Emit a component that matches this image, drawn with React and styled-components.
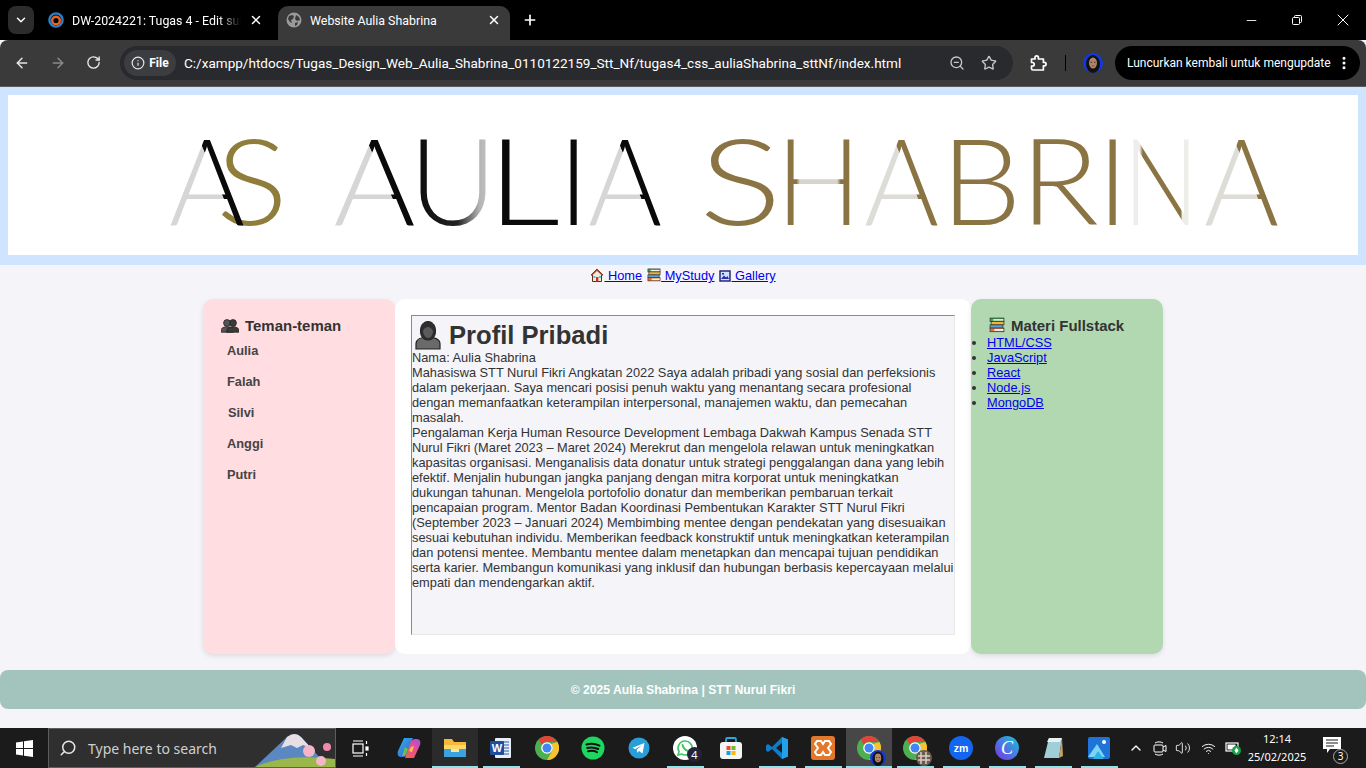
import React from 'react';
import styled, { createGlobalStyle } from 'styled-components';
import {
  ChevronDown, ChevronUp, X, Plus, Minus, ArrowLeft, ArrowRight, RotateCw, Info,
  ZoomOut, Star, EllipsisVertical, Search, Volume2, Wifi,
} from 'lucide-react';

const GlobalStyle = createGlobalStyle`
  html, body {
    margin: 0;
    padding: 0;
    height: 100%;
    overflow: hidden;
    background: #f4f4f9;
  }
`;

const Screen = styled.div`
  width: 1366px;
  height: 768px;
  display: flex;
  flex-direction: column;
  overflow: hidden;
  font-family: "Liberation Sans", Arial, sans-serif;
`;

/* browser chrome */
const TabStrip = styled.div`
  height: 40px;
  flex: none;
  background: #000;
  display: flex;
  align-items: flex-end;
  padding-left: 8px;
  color: #fff;
  font-family: Roboto, "Noto Sans", sans-serif;
`;

const TabSearch = styled.div`
  width: 26px;
  height: 28px;
  margin-bottom: 6px;
  border-radius: 8px;
  background: #2c2c2c;
  display: flex;
  align-items: center;
  justify-content: center;
`;

const Tab = styled.div`
  width: ${(p) => p.$width}px;
  height: 34px;
  padding: 0 ${(p) => p.$right}px 6px ${(p) => p.$left}px;
  box-sizing: border-box;
  border-radius: 10px 10px 0 0;
  background: ${(p) => (p.$active ? '#3a3a3a' : 'transparent')};
  display: flex;
  align-items: center;
  gap: 8px;
  font-size: 12.4px;
`;

const TabTitle = styled.span`
  flex: 1;
  white-space: nowrap;
  overflow: hidden;
  -webkit-mask-image: ${(p) => (p.$fade ? 'linear-gradient(90deg, #000 86%, transparent)' : 'none')};
`;

const NewTab = styled.div`
  margin: 0 0 6px 12px;
  height: 28px;
  display: flex;
  align-items: center;
`;

const WindowControls = styled.div`
  margin-left: auto;
  display: flex;
  height: 40px;
`;

const WindowButton = styled.div`
  width: 46px;
  display: flex;
  align-items: center;
  justify-content: center;
`;

const RestoreIcon = () => (
  <svg width="12" height="12" viewBox="0 0 12 12" fill="none" stroke="#fff" strokeWidth="1">
    <rect x="1.5" y="3.5" width="7" height="7" rx="1" />
    <path d="M3.500 3.500V2.500a1 1 0 0 1 1-1h5a1 1 0 0 1 1 1v5a1 1 0 0 1-1 1h-1" />
  </svg>
);

const Toolbar = styled.div`
  height: 47px;
  flex: none;
  box-sizing: border-box;
  background: #3a3a3a;
  border-bottom: 1px solid #5c5c5c;
  border-radius: 8px 8px 0 0;
  display: flex;
  align-items: center;
  padding: 0 6px 1px 0;
  color: #fff;
  font-family: Roboto, "Noto Sans", sans-serif;
`;

const NavButtons = styled.div`
  width: 120px;
  flex: none;
  display: flex;
  align-items: center;
  padding-left: 14px;
  box-sizing: border-box;
  gap: 20px;
`;

const Omnibox = styled.div`
  width: 893px;
  height: 34px;
  flex: none;
  border-radius: 17px;
  background: #282a2d;
  display: flex;
  align-items: center;
  padding: 0 16px 0 4px;
  box-sizing: border-box;
`;

const SiteChip = styled.div`
  width: 52px;
  height: 26px;
  flex: none;
  box-sizing: border-box;
  border-radius: 13px;
  background: #3c3d40;
  display: flex;
  align-items: center;
  justify-content: center;
  gap: 4px;
  font-size: 12px;
  font-weight: 700;
`;

const UrlText = styled.span`
  margin-left: 8px;
  flex: 1;
  font-size: 13.55px;
  white-space: nowrap;
  color: #fff;
`;

const OmniIcons = styled.div`
  display: flex;
  align-items: center;
  gap: 16px;
`;

const ToolSeparator = styled.div`
  width: 1px;
  height: 16px;
  margin: 0 17px 0 18px;
  background: #000;
`;

const UpdatePill = styled.div`
  margin-left: 12px;
  width: 245px;
  height: 34px;
  box-sizing: border-box;
  border-radius: 17px;
  background: #000;
  display: flex;
  align-items: center;
  justify-content: space-between;
  padding: 0 8px 0 12px;
  font-size: 12px;
  white-space: nowrap;
`;

const ExtensionSlot = styled.div`
  margin-left: 16px;
  display: flex;
`;

const ExtensionIcon = () => (
  <svg width="18" height="18" viewBox="0 0 18 18" fill="none" stroke="#fff" strokeWidth="1.700" strokeLinejoin="round">
    <path d="M2.500 5H6V3.500a1.700 1.700 0 0 1 3.400 0V5h5v3.400h1a1.700 1.700 0 0 1 0 3.400h-1v4.200H4a1.500 1.500 0 0 1-1.500-1.500V12H3.500a1.500 1.500 0 0 0 0-3.500H2.500z" />
  </svg>
);

/* page */
const Page = styled.div`
  flex: 1;
  min-height: 0;
  background: #f4f4f9;
  color: #333;
  font-size: 12.8px;
`;

const Header = styled.header`
  background: #cfe4ff;
  padding: 8px 8px 10px;
`;

const Banner = styled.div`
  height: 160px;
  background: #fff;
`;

const Nav = styled.nav`
  height: 34px;
  padding-top: 3px;
  box-sizing: border-box;
  display: flex;
  align-items: flex-start;
  justify-content: center;
  gap: 5px;
  font-size: 12.8px;
  line-height: 15px;
`;

const NavLink = styled.a`
  color: #00e;
  text-decoration: underline;
  white-space: pre;

  svg {
    vertical-align: -2px;
  }
`;

const Columns = styled.div`
  width: 960px;
  height: 355px;
  margin: 0 auto;
  display: flex;
`;

const Side = styled.aside`
  width: 192px;
  flex: none;
  box-sizing: border-box;
  border-radius: 10px;
  background: ${(p) => p.$bg};
  box-shadow: 0 2px 5px rgba(0, 0, 0, 0.1);
  padding: 18px 0 0 ${(p) => p.$pad}px;
`;

const SideTitle = styled.h3`
  margin: 0;
  padding-left: ${(p) => p.$indent}px;
  height: 16px;
  display: flex;
  align-items: center;
  gap: ${(p) => p.$gap}px;
  font-size: 14.976px;
  font-weight: bold;
  color: #333;
  white-space: nowrap;
`;

const FriendList = styled.div`
  margin-top: 10px;
  display: flex;
  flex-direction: column;
  gap: 16px;
  padding-left: 6px;
`;

const Friend = styled.div`
  height: 15px;
  line-height: 15px;
  font-size: 12.8px;
  font-weight: bold;
  color: #444;
  padding-left: ${(p) => (p.$nudge ? 1 : 0)}px;
`;

const Main = styled.main`
  flex: 1;
  box-sizing: border-box;
  padding: 16px 16px 19px;
  background: #fff;
  border-radius: 10px;
`;

const Frame = styled.section`
  height: 100%;
  box-sizing: border-box;
  background: #f4f4f9;
  border: 1px solid #e8e8e8;
  border-top-color: #8a8a8a;
  border-left-color: #8a8a8a;
`;

const Title = styled.h1`
  margin: 0;
  height: 34px;
  box-sizing: border-box;
  padding: 4px 0 0 2px;
  display: flex;
  align-items: center;
  gap: 7px;
  font-size: 25.6px;
  font-weight: bold;
  color: #333;
`;

const Body = styled.div`
  font-size: 12.8px;
  line-height: 15px;
  color: #333;
`;

const Materi = styled.ul`
  margin: 2px 0 0;
  padding: 0 0 0 16px;
  font-size: 12.8px;
  line-height: 15px;
  color: #333;

  a {
    color: #00e;
  }
`;

const Footer = styled.footer`
  margin-top: 16px;
  height: 39px;
  border-radius: 8px;
  background: #a3c4bc;
  color: #fff;
  display: flex;
  align-items: center;
  justify-content: center;
  font-size: 12.16px;
  font-weight: bold;
`;

/* taskbar */
const Taskbar = styled.div`
  height: 40px;
  flex: none;
  background: #1b1b1b;
  display: flex;
  align-items: stretch;
  color: #fff;
  font-family: "Noto Sans", "Open Sans", sans-serif;
`;

const StartButton = styled.div`
  width: 48px;
  flex: none;
  display: flex;
  align-items: center;
  justify-content: center;
`;

const SearchBox = styled.div`
  position: relative;
  width: 288px;
  flex: none;
  box-sizing: border-box;
  border: 1px solid #5e5e5e;
  background: #2f2f2f;
  display: flex;
  align-items: center;
  gap: 11px;
  padding-left: 10px;
  font-size: 14px;
  color: #cfcfcf;
  overflow: hidden;
`;

const SearchArt = styled.svg`
  position: absolute;
  right: 0;
  bottom: 0;
`;

const MirroredSearch = styled(Search)`
  transform: scaleX(-1);
`;

const Apps = styled.div`
  display: flex;
  margin-left: 2px;
`;

const AppSlot = styled.div`
  position: relative;
  width: 46px;
  display: flex;
  align-items: center;
  justify-content: center;
  background: ${(p) => (p.$state === 'active' ? '#474747' : p.$state === 'open' ? '#2b2b2b' : 'transparent')};

  &::after {
    content: '';
    display: ${(p) => (p.$state ? 'block' : 'none')};
    position: absolute;
    bottom: 0;
    height: 2px;
    background: #8fe3ea;
    left: ${(p) => (p.$state === 'run' ? 5 : 0)}px;
    right: ${(p) => (p.$state === 'run' ? 4 : 0)}px;
  }
`;

const Tray = styled.div`
  flex: 1;
  display: flex;
  align-items: center;
  color: #fff;
`;

const TrayItem = styled.div`
  width: ${(p) => p.$width}px;
  display: flex;
  align-items: center;
  justify-content: center;
`;

const Clock = styled.div`
  width: 64px;
  text-align: center;
  font-size: 11px;
  line-height: 18px;
  white-space: nowrap;
`;

const Notify = styled.div`
  position: relative;
  margin-left: 13px;
  width: 24px;
  height: 24px;
`;

const NotifyBadge = styled.div`
  position: absolute;
  right: -2px;
  bottom: -4px;
  width: 15px;
  height: 15px;
  box-sizing: border-box;
  border: 1px solid #aaa;
  border-radius: 50%;
  background: #1b1b1b;
  font-size: 10px;
  line-height: 13px;
  text-align: center;
`;

const Badge = styled.div`
  position: absolute;
  right: 6px;
  bottom: 6px;
  width: 15px;
  height: 15px;
  border-radius: 50%;
  background: #23233a;
  color: #fff;
  font-size: 11px;
  line-height: 15px;
  text-align: center;
`;

/* emoji drawings */
const HouseEmoji = () => (
  <svg width="14" height="14" viewBox="0 0 14 14">
    <path d="M7 1 1 7h1.500v6.500h9V7H13z" fill="#f3ead8" stroke="#5b2f1c" strokeWidth="1" />
    <path d="M7 1 1 7l1.200.5L7 3l4.800 4.500L13 7z" fill="#b5462e" />
    <rect x="6" y="9" width="2.400" height="4.500" fill="#c0392b" />
    <rect x="3.400" y="8" width="2" height="2" fill="#4ec3e0" />
    <rect x="9" y="8" width="2" height="2" fill="#4ec3e0" />
  </svg>
);

const BooksEmoji = ({ size = 15 }) => (
  <svg width={size} height={size} viewBox="0 0 15 15">
    <rect x="1" y="1" width="13" height="3.200" fill="#3fa34d" stroke="#333" strokeWidth=".7" />
    <rect x="2" y="4.200" width="12" height="3.200" fill="#f3b43c" stroke="#333" strokeWidth=".7" />
    <rect x="1" y="7.400" width="12" height="3" fill="#58a6d6" stroke="#333" strokeWidth=".7" />
    <rect x="1" y="10.400" width="13" height="3.400" fill="#ee6b2d" stroke="#333" strokeWidth=".7" />
    <rect x="5" y="11.200" width="8.500" height="1.800" fill="#f5f5f5" />
    <rect x="4" y="2" width="9.500" height="1.400" fill="#eef3ea" />
  </svg>
);

const FrameEmoji = () => (
  <svg width="12" height="12" viewBox="0 0 12 12">
    <rect x="1" y="1" width="10" height="10" fill="#cfe3ff" stroke="#1a1a6e" strokeWidth="1.400" />
    <path d="M2 9l3-3.500 2 2 1.500-1.500L10 9z" fill="#2a2ab5" />
    <rect x="3" y="3" width="2" height="1.600" fill="#2a2ab5" />
  </svg>
);

const PersonShape = ({ cx, cy, r, fill }) => (
  <g fill={fill} stroke="#222" strokeWidth=".8">
    <path d={`M${cx - r * 1.9} ${cy + r * 2.7} q0 ${-r * 1.6} ${r * 1.9} ${-r * 1.6} q${r * 1.9} 0 ${r * 1.9} ${r * 1.6}z`} />
    <circle cx={cx} cy={cy} r={r} />
  </g>
);

const BustsEmoji = () => (
  <svg width="18" height="15" viewBox="0 0 18 15">
    <PersonShape cx={6} cy={5} r={3.4} fill="#555" />
    <PersonShape cx={12} cy={5} r={3.4} fill="#3a3a3a" />
  </svg>
);

const BustEmoji = () => (
  <svg width="28" height="30" viewBox="0 0 28 30">
    <path d="M2 29v-5c0-5 6-7 12-7s12 2 12 7v5z" fill="#6a6a6a" stroke="#222" strokeWidth="1.200" />
    <path d="M6.500 11c0-6 3-9.500 7.500-9.500s7.500 3.500 7.500 9.500-3 9-7.500 9-7.500-3-7.500-9z" fill="#2e2e2e" stroke="#222" />
    <path d="M9 11c1-3 3-4 6-4 2 1 3.500 2.500 4 4.500-.5 4-2.500 6.500-5 6.500s-4.500-3-5-7z" fill="#5b5b5b" />
  </svg>
);

/* logo banner, real text placed letter by letter */
const LogoGradient = ({ id, stops, x1 = 0, y1 = 0, x2 = 1, y2 = 0 }) => (
  <linearGradient id={id} x1={x1} y1={y1} x2={x2} y2={y2}>
    {stops.map(([offset, color], i) => (
      <stop key={i} offset={offset} stopColor={color} />
    ))}
  </linearGradient>
);

// only the right leg of each A is heavy, so the cut runs along that leg
const legCut = { x1: 0.1, y1: 0.455, x2: 0.7, y2: -0.015 };

const logoLetters = [
  ['S', 208, 72, '#8f7d3c'],
  ['A', 161, 76, 'url(#aBlack)'],
  ['A', 325.6, 82, 'url(#aBlack)'],
  ['U', 401, 88, 'url(#uBlack)'],
  ['L', 479, 73, '#0a0a0a'],
  ['I', 550, null, '#0a0a0a'],
  ['A', 580, 74, 'url(#aBlack)'],
  ['S', 691, 83, '#8b7443'],
  ['H', 768, 85, 'url(#hGold)'],
  ['A', 856, 75, 'url(#aGold)'],
  ['B', 932.5, 81, '#8b7443'],
  ['R', 1012, 79, '#8b7443'],
  ['I', 1089, null, '#8b7443'],
  ['N', 1115, 76, 'url(#nGold)'],
  ['A', 1196, 75, 'url(#aGold)'],
];

const LogoSvg = styled.svg`
  display: block;
  filter: blur(0.4px);
`;

const LogoText = styled.text`
  font-family: Lato, "Open Sans", sans-serif;
  font-weight: 300;
  font-size: 120px;
`;

const Logo = () => (
  <LogoSvg width="1350" height="160" viewBox="0 0 1350 160">
    <defs>
      <LogoGradient id="aBlack" {...legCut} stops={[[0, '#d6d6d6'], [0.49, '#d6d6d6'], [0.5, '#0a0a0a'], [1, '#0a0a0a']]} />
      <LogoGradient id="uBlack" stops={[[0, '#0a0a0a'], [0.55, '#222'], [0.8, '#b4b4b4'], [1, '#cfcfcf']]} />
      <LogoGradient id="aGold" {...legCut} stops={[[0, '#dedcd6'], [0.49, '#dedcd6'], [0.5, '#8b7443'], [1, '#8b7443']]} />
      <LogoGradient id="hGold" stops={[[0, '#8b7443'], [0.24, '#8b7443'], [0.28, '#d6d4cd'], [0.72, '#d6d4cd'], [0.76, '#8b7443'], [1, '#8b7443']]} />
      <LogoGradient id="nGold" stops={[[0, '#eeede9'], [0.22, '#eeede9'], [0.26, '#8b7443'], [0.76, '#8b7443'], [0.78, '#eeede9'], [1, '#eeede9']]} />
    </defs>
    {logoLetters.map(([letter, x, width, fill], i) => (
      <LogoText
        key={i}
        x={x}
        y="130"
        textLength={width || undefined}
        lengthAdjust={width ? 'spacingAndGlyphs' : undefined}
        fill={fill}
      >
        {letter}
      </LogoText>
    ))}
  </LogoSvg>
);

/* small favicons and avatars */
const MoodleIcon = () => (
  <svg width="16" height="16" viewBox="0 0 16 16" fill="none">
    <circle cx="8" cy="8" r="6.600" stroke="#2a7fc9" strokeWidth="2.400" />
    <circle cx="8" cy="8.500" r="3.800" stroke="#f0621f" strokeWidth="2.400" />
  </svg>
);

const GlobeIcon = () => (
  <svg width="16" height="16" viewBox="0 0 16 16">
    <circle cx="8" cy="8" r="7.500" fill="#9a9a9a" />
    <path d="M3 4l3-1 2 1-1 3-2 1 1 3-2-1-2-3zM10 3l3 2 1 3-3 1-2-2zM9 11l3-1-1 3-2 1z" fill="#3a3a3a" />
  </svg>
);

const Avatar = ({ size = 20, ring = '#1438e0' }) => (
  <svg width={size} height={size} viewBox="0 0 20 20">
    <circle cx="10" cy="10" r="10" fill={ring} />
    <ellipse cx="10" cy="11" rx="7" ry="9" fill="#111" />
    <ellipse cx="10" cy="10" rx="4" ry="5.500" fill="#b08468" />
    <rect x="7.500" y="8.800" width="1.600" height=".8" fill="#222" />
    <rect x="11" y="8.800" width="1.600" height=".8" fill="#222" />
    <rect x="8.800" y="12.500" width="2.500" height=".8" fill="#7c3a34" />
  </svg>
);

const WindowsLogo = () => (
  <svg width="17" height="17" viewBox="0 0 17 17" fill="#fff">
    <path d="M0 2.400 7 1.400V8H0zM8 1.200 17 0v8H8zM0 9h7v6.600l-7-1zM8 9h9v8l-9-1.200z" />
  </svg>
);

const TaskView = () => (
  <svg width="17" height="17" viewBox="0 0 17 17" fill="none" stroke="#fff" strokeWidth="1.200">
    <rect x="1" y="4" width="10" height="9" />
    <path d="M1 1h10M1 16h10" />
    <path d="M14.500 1v3M14.500 13v3" />
    <rect x="14" y="7" width="2" height="3" fill="#fff" />
  </svg>
);

const Copilot = () => (
  <svg width="24" height="24" viewBox="0 0 24 24">
    <defs>
      <linearGradient id="copA" x1="0" y1="0" x2="1" y2="1">
        <stop offset="0" stopColor="#2fb8e6" />
        <stop offset="1" stopColor="#3a55d8" />
      </linearGradient>
      <linearGradient id="copB" x1="0" y1="1" x2="1" y2="0">
        <stop offset="0" stopColor="#f2683a" />
        <stop offset=".6" stopColor="#e84aa0" />
        <stop offset="1" stopColor="#8a5ae0" />
      </linearGradient>
    </defs>
    <path d="M7 2h9l-5 14c-1 3-3 5-5 5H4C1 21 0 18 1 15z" fill="url(#copA)" />
    <path d="M17 22H8l5-14c1-3 3-5 5-5h2c3 0 4 3 3 6z" fill="url(#copB)" />
    <path d="M5 20l3-9 3 2-3 7z" fill="#6cc04a" />
    <path d="M12 15l2-4 3-1-2 6z" fill="#f8c53c" />
  </svg>
);

const Explorer = () => (
  <svg width="24" height="22" viewBox="0 0 24 22">
    <path d="M1 2h8l2 3h12v15H1z" fill="#f5b93c" />
    <path d="M1 8h22v12H1z" fill="#ffd763" />
    <rect x="1" y="12" width="22" height="8" fill="#3aa3e0" />
    <rect x="8" y="12" width="8" height="3" fill="#f5e6a6" />
  </svg>
);

const Word = () => (
  <svg width="24" height="24" viewBox="0 0 24 24">
    <rect x="6" y="2" width="16" height="20" rx="1" fill="#e8eef8" />
    <path d="M14 6h6M14 9h6M14 12h6M14 15h6M14 18h6" stroke="#2b5aa8" strokeWidth="1.200" />
    <rect x="1" y="5" width="14" height="14" rx="1" fill="#1f4e9e" />
    <text x="8" y="16" textAnchor="middle" fill="#fff" fontSize="11" fontWeight="bold" fontFamily="Liberation Sans">W</text>
  </svg>
);

const ChromeIcon = ({ size = 24 }) => (
  <svg width={size} height={size} viewBox="0 0 24 24">
    <circle cx="12" cy="12" r="12" fill="#4caf50" />
    <path d="M12 0a12 12 0 0 1 10.400 6H12a6 6 0 0 0-5.200 3L3.600 3.500A12 12 0 0 1 12 0z" fill="#e5433a" />
    <path d="M22.400 6A12 12 0 0 1 12 24l5.200-9A6 6 0 0 0 16 8z" fill="#fbc02d" />
    <circle cx="12" cy="12" r="5.800" fill="#fff" />
    <circle cx="12" cy="12" r="4.500" fill="#4285f4" />
  </svg>
);

const Spotify = () => (
  <svg width="24" height="24" viewBox="0 0 24 24" fill="none">
    <circle cx="12" cy="12" r="11.500" fill="#1ed760" />
    <path d="M5.500 8.500c4-1.200 9-.8 13 1.200M6.200 12c3.500-1 7.500-.7 11 1M7 15.300c3-.7 6.500-.5 9 .9" stroke="#111" strokeWidth="2" strokeLinecap="round" />
  </svg>
);

const Telegram = () => (
  <svg width="22" height="22" viewBox="0 0 22 22">
    <circle cx="11" cy="11" r="10.500" fill="#2a9ed8" />
    <path d="M4.500 10.800 16.500 6l-2 10.500-3.500-2.600-1.800 1.800-.4-3 5-4.500-6.500 4z" fill="#fff" />
  </svg>
);

const WhatsApp = () => (
  <svg width="24" height="24" viewBox="0 0 24 24">
    <circle cx="12" cy="12" r="12" fill="#fff" />
    <path d="M12 5a7 7 0 0 0-6 10.500L5 19l3.600-1A7 7 0 1 0 12 5z" fill="none" stroke="#3cc560" strokeWidth="1.600" />
    <path d="M9.500 9c1 3.500 2.500 5 5.500 6" fill="none" stroke="#3cc560" strokeWidth="2" strokeLinecap="round" />
  </svg>
);

const Store = () => (
  <svg width="24" height="24" viewBox="0 0 24 24">
    <path d="M7 7V3.500a1.500 1.500 0 0 1 1.500-1.500h7A1.500 1.500 0 0 1 17 3.500V7" fill="none" stroke="#2aa8e6" strokeWidth="1.800" />
    <rect x="1" y="6" width="22" height="17" rx="3" fill="#f5f5f5" />
    <rect x="7.500" y="10" width="4" height="4" fill="#e8502c" />
    <rect x="12.500" y="10" width="4" height="4" fill="#7ab62c" />
    <rect x="7.500" y="15" width="4" height="4" fill="#10a0e8" />
    <rect x="12.500" y="15" width="4" height="4" fill="#f8b810" />
  </svg>
);

const VsCode = () => (
  <svg width="24" height="24" viewBox="0 0 24 24">
    <path d="M17 1 7 11 3 8 1 9.500v5L3 16l4-3 10 10 6-2.500v-17zM17 7v10l-6-5z" fill="#0f7cc8" />
    <path d="M17 1l6 2.500v17L17 23z" fill="#24a0ea" />
  </svg>
);

const Xampp = () => (
  <svg width="24" height="24" viewBox="0 0 24 24" fill="none">
    <rect x="0" y="0" width="24" height="24" rx="3" fill="#e3782b" />
    <path d="M6 5h4l2 3 2-3h4l2 3-3 4 3 4-2 3h-4l-2-3-2 3H6l-2-3 3-4-3-4z" stroke="#fff" strokeWidth="2" />
  </svg>
);

const ProfileWrap = styled.div`
  position: relative;
  width: 24px;
  height: 24px;
`;

const ProfileBadge = styled.div`
  position: absolute;
  right: -5px;
  bottom: -5px;
  width: 16px;
  height: 16px;
`;

const ChromeProfile = ({ ring, tint }) => (
  <ProfileWrap>
    <ChromeIcon />
    <ProfileBadge>
      {tint ? (
        <svg width="16" height="16" viewBox="0 0 16 16">
          <circle cx="8" cy="8" r="8" fill="#6a5a50" />
          <path d="M5 2v12M10 2v12M2 6h12M2 10h12" stroke="#d8cfc4" strokeWidth="1.500" />
        </svg>
      ) : (
        <Avatar size={16} ring={ring} />
      )}
    </ProfileBadge>
  </ProfileWrap>
);

const ZoomApp = () => (
  <svg width="24" height="24" viewBox="0 0 24 24">
    <circle cx="12" cy="12" r="12" fill="#1466f0" />
    <text x="12" y="15.500" textAnchor="middle" fill="#fff" fontSize="10.500" fontWeight="bold" fontFamily="Liberation Sans">zm</text>
  </svg>
);

const Canva = () => (
  <svg width="24" height="24" viewBox="0 0 24 24">
    <defs>
      <linearGradient id="canva" x1="0" y1="1" x2="1" y2="0">
        <stop offset="0" stopColor="#7a32e8" />
        <stop offset="1" stopColor="#18c4d8" />
      </linearGradient>
    </defs>
    <circle cx="12" cy="12" r="12" fill="url(#canva)" />
    <text x="12" y="18" textAnchor="middle" fill="#fff" fontSize="18" fontStyle="italic" fontFamily="Liberation Serif">C</text>
  </svg>
);

const Notepad = () => (
  <svg width="24" height="24" viewBox="0 0 24 24">
    <path d="M8 2h13l-3 20H3z" fill="#9fd0d8" />
    <path d="M8 2h13l-2 4H6z" fill="#e8f0f0" />
    <path d="M21 2l1 18-4 2z" fill="#c8a060" />
  </svg>
);

const Photos = () => (
  <svg width="24" height="24" viewBox="0 0 24 24">
    <rect x="1" y="1" width="22" height="22" rx="2" fill="#1e74d8" />
    <circle cx="17" cy="6" r="2" fill="#fff" />
    <path d="M1 21 10 8l8 13z" fill="#7fd4f4" />
    <path d="M6 23l5-8 6 8z" fill="#2ab4ea" />
  </svg>
);

const MeetIcon = () => (
  <svg width="15" height="17" viewBox="0 0 15 17" fill="none" stroke="#fff" strokeWidth="1">
    <rect x="1" y="5" width="9" height="7" rx="1" />
    <path d="M10 7l3-1.500v6L10 10M2 3c2-1.500 6-1.500 8 0M2 14c2 1.500 6 1.500 8 0" />
  </svg>
);

const BatteryIcon = () => (
  <svg width="16" height="16" viewBox="0 0 16 16">
    <rect x="1" y="3" width="12" height="8" fill="none" stroke="#fff" strokeWidth="1.200" />
    <rect x="2.500" y="4.500" width="8" height="5" fill="#fff" />
    <circle cx="11.500" cy="10.500" r="4.500" fill="#16a34a" />
    <path d="M11.500 7.500l2 3-2 3-2-3z" fill="#fff" />
  </svg>
);

const NotifyIcon = () => (
  <svg width="20" height="18" viewBox="0 0 20 18" fill="#fff">
    <path d="M1 1h18v12H8l-3 4v-4H1z" />
    <path d="M4 4h12M4 7h12M4 10h8" stroke="#1b1b1b" strokeWidth="1" />
  </svg>
);

const taskApps = [
  { id: 'copilot', icon: <Copilot /> },
  { id: 'explorer', icon: <Explorer />, state: 'open' },
  { id: 'word', icon: <Word />, state: 'run' },
  { id: 'chrome', icon: <ChromeIcon /> },
  { id: 'spotify', icon: <Spotify /> },
  { id: 'telegram', icon: <Telegram /> },
  { id: 'whatsapp', icon: <WhatsApp />, state: 'run', badge: '4' },
  { id: 'store', icon: <Store /> },
  { id: 'vscode', icon: <VsCode />, state: 'run' },
  { id: 'xampp', icon: <Xampp />, state: 'run' },
  { id: 'chromeA', icon: <ChromeProfile ring="#1438e0" />, state: 'active' },
  { id: 'chromeB', icon: <ChromeProfile tint />, state: 'run' },
  { id: 'zoom', icon: <ZoomApp />, state: 'run' },
  { id: 'canva', icon: <Canva />, state: 'run' },
  { id: 'notepad', icon: <Notepad />, state: 'run' },
  { id: 'photos', icon: <Photos />, state: 'run' },
];

const friends = ['Aulia', 'Falah', 'Silvi', 'Anggi', 'Putri'];
const materi = ['HTML/CSS', 'JavaScript', 'React', 'Node.js', 'MongoDB'];

const App = () => {
  return (
    <Screen>
      <GlobalStyle />
      <TabStrip>
        <TabSearch>
          <ChevronDown size={14} color="#fff" strokeWidth={2.5} />
        </TabSearch>
        <Tab $width={244} $left={14} $right={15}>
          <MoodleIcon />
          <TabTitle $fade>DW-2024221: Tugas 4 - Edit submission</TabTitle>
          <X size={14} color="#fff" strokeWidth={2.5} />
        </Tab>
        <Tab $active $width={232} $left={8} $right={9}>
          <GlobeIcon />
          <TabTitle>Website Aulia Shabrina</TabTitle>
          <X size={14} color="#fff" strokeWidth={2.5} />
        </Tab>
        <NewTab>
          <Plus size={16} color="#fff" strokeWidth={2.5} />
        </NewTab>
        <WindowControls>
          <WindowButton><Minus size={15} color="#fff" strokeWidth={1.4} /></WindowButton>
          <WindowButton><RestoreIcon /></WindowButton>
          <WindowButton><X size={20} color="#fff" strokeWidth={1.2} /></WindowButton>
        </WindowControls>
      </TabStrip>

      <Toolbar>
        <NavButtons>
          <ArrowLeft size={16} color="#e8e8e8" strokeWidth={2.2} />
          <ArrowRight size={16} color="#8a8a8a" strokeWidth={2.2} />
          <RotateCw size={15} color="#e8e8e8" strokeWidth={2.2} />
        </NavButtons>
        <Omnibox>
          <SiteChip>
            <Info size={14} color="#e8e8e8" />
            File
          </SiteChip>
          <UrlText>C:/xampp/htdocs/Tugas_Design_Web_Aulia_Shabrina_0110122159_Stt_Nf/tugas4_css_auliaShabrina_sttNf/index.html</UrlText>
          <OmniIcons>
            <ZoomOut size={16} color="#c8c8c8" />
            <Star size={16} color="#c8c8c8" />
          </OmniIcons>
        </Omnibox>
        <ExtensionSlot>
          <ExtensionIcon />
        </ExtensionSlot>
        <ToolSeparator />
        <Avatar />
        <UpdatePill>
          Luncurkan kembali untuk mengupdate
          <EllipsisVertical size={16} color="#fff" strokeWidth={2.5} />
        </UpdatePill>
      </Toolbar>

      <Page>
        <Header>
          <Banner>
            <Logo />
          </Banner>
        </Header>
        <Nav>
          <NavLink href="#"><HouseEmoji /> Home</NavLink>
          <NavLink href="#"><BooksEmoji size={14} /> MyStudy</NavLink>
          <NavLink href="#"><FrameEmoji /> Gallery</NavLink>
        </Nav>
        <Columns>
          <Side $bg="#ffdde1" $pad={18}>
            <SideTitle $indent={0} $gap={6}><BustsEmoji /> Teman-teman</SideTitle>
            <FriendList>
              {friends.map((name) => (
                <Friend key={name} $nudge={name === 'Silvi'}>{name}</Friend>
              ))}
            </FriendList>
          </Side>
          <Main>
            <Frame>
              <Title><BustEmoji /> Profil Pribadi</Title>
              <Body>
                Nama: Aulia Shabrina<br />
                Mahasiswa STT Nurul Fikri Angkatan 2022 Saya adalah pribadi yang sosial dan perfeksionis dalam pekerjaan. Saya mencari posisi penuh waktu yang menantang secara profesional dengan memanfaatkan keterampilan interpersonal, manajemen waktu, dan pemecahan masalah.<br />
                Pengalaman Kerja Human Resource Development Lembaga Dakwah Kampus Senada STT Nurul Fikri (Maret 2023 – Maret 2024) Merekrut dan mengelola relawan untuk meningkatkan kapasitas organisasi. Menganalisis data donatur untuk strategi penggalangan dana yang lebih efektif. Menjalin hubungan jangka panjang dengan mitra korporat untuk meningkatkan dukungan tahunan. Mengelola portofolio donatur dan memberikan pembaruan terkait pencapaian program. Mentor Badan Koordinasi Pembentukan Karakter STT Nurul Fikri (September 2023 – Januari 2024) Membimbing mentee dengan pendekatan yang disesuaikan sesuai kebutuhan individu. Memberikan feedback konstruktif untuk meningkatkan keterampilan dan potensi mentee. Membantu mentee dalam menetapkan dan mencapai tujuan pendidikan serta karier. Membangun komunikasi yang inklusif dan hubungan berbasis kepercayaan melalui empati dan mendengarkan aktif.
              </Body>
            </Frame>
          </Main>
          <Side $bg="#b2d8b2" $pad={0}>
            <SideTitle $indent={18} $gap={6}><BooksEmoji size={16} /> Materi Fullstack</SideTitle>
            <Materi>
              {materi.map((item) => (
                <li key={item}><a href="#">{item}</a></li>
              ))}
            </Materi>
          </Side>
        </Columns>
        <Footer>© 2025 Aulia Shabrina | STT Nurul Fikri</Footer>
      </Page>

      <Taskbar>
        <StartButton><WindowsLogo /></StartButton>
        <SearchBox>
          <MirroredSearch size={18} color="#e8e8e8" />
          Type here to search
          <SearchArt width="80" height="38" viewBox="0 0 80 38">
            <path d="M0 38 32 8q8-6 14 0l22 24v6z" fill="#5b88c0" />
            <path d="M32 8q8-6 14 0l10 11-8-3-6 3-6-3-10 3z" fill="#e8dfe4" />
            <path d="M0 38q30-14 80-8v8z" fill="#9ab84a" />
            <circle cx="54" cy="22" r="6" fill="#f4b6c8" />
            <circle cx="66" cy="32" r="5" fill="#f4b6c8" />
            <circle cx="72" cy="18" r="4" fill="#f08aa8" />
          </SearchArt>
        </SearchBox>
        <TrayItem $width={48}><TaskView /></TrayItem>
        <Apps>
          {taskApps.map((app) => (
            <AppSlot key={app.id} $state={app.state}>
              {app.icon}
              {app.badge && <Badge>{app.badge}</Badge>}
            </AppSlot>
          ))}
        </Apps>
        <Tray>
          <TrayItem $width={27}><ChevronUp size={16} color="#fff" /></TrayItem>
          <TrayItem $width={22}><MeetIcon /></TrayItem>
          <TrayItem $width={24}><Volume2 size={16} color="#fff" strokeWidth={1.3} /></TrayItem>
          <TrayItem $width={26}><Wifi size={15} color="#fff" strokeWidth={1.5} /></TrayItem>
          <TrayItem $width={24}><BatteryIcon /></TrayItem>
          <Clock>12:14<br />25/02/2025</Clock>
          <Notify>
            <NotifyIcon />
            <NotifyBadge>3</NotifyBadge>
          </Notify>
        </Tray>
      </Taskbar>
    </Screen>
  );
};

export default App;
